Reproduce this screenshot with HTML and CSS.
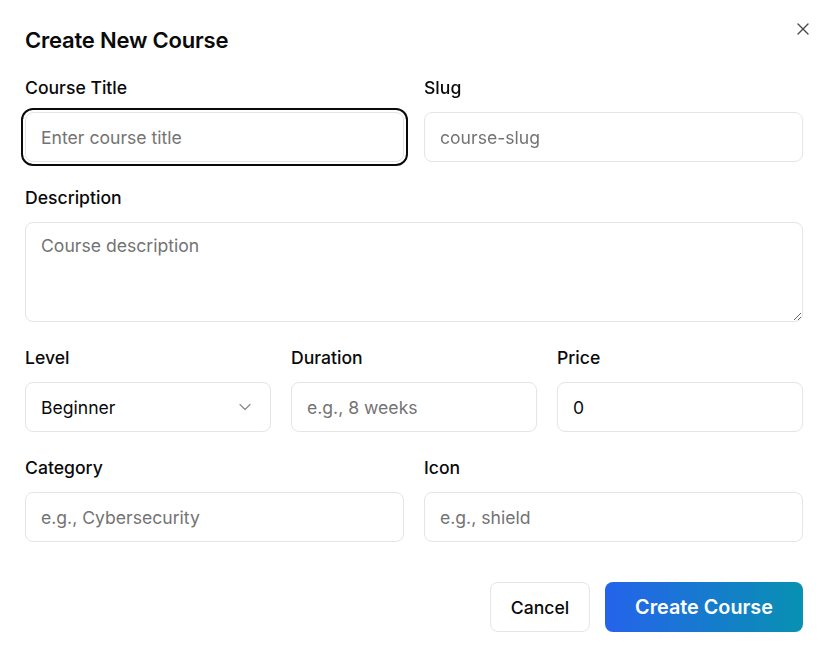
FILE: index.html
```html
<!DOCTYPE html>
<html lang="en">
<head>
<meta charset="utf-8">
<title>Create New Course</title>
<link rel="stylesheet" href="styles.css">
</head>
<body>
<div class="dialog">
  <button class="close" aria-label="Close">
    <svg width="12" height="12" viewBox="0 0 12 12" fill="none" stroke="currentColor" stroke-width="1.4" stroke-linecap="round"><path d="M1 1 11 11"/><path d="M11 1 1 11"/></svg>
  </button>
  <h2 class="title">Create New Course</h2>
  <form class="form">
    <div class="row two">
      <div class="field">
        <label class="label">Course Title</label>
        <input class="input focused" placeholder="Enter course title" autofocus>
      </div>
      <div class="field">
        <label class="label">Slug</label>
        <input class="input" placeholder="course-slug">
      </div>
    </div>
    <div class="field">
      <label class="label">Description</label>
      <textarea class="input textarea" placeholder="Course description"></textarea>
    </div>
    <div class="row three">
      <div class="field">
        <label class="label">Level</label>
        <div class="input select">
          <span>Beginner</span>
          <svg width="12" height="8" viewBox="0 0 12 8" fill="none" stroke="currentColor" stroke-width="1.2" stroke-linecap="round" stroke-linejoin="round"><path d="M1 1.5 6 6.5 11 1.5"/></svg>
        </div>
      </div>
      <div class="field">
        <label class="label">Duration</label>
        <input class="input" placeholder="e.g., 8 weeks">
      </div>
      <div class="field">
        <label class="label">Price</label>
        <input class="input" value="0">
      </div>
    </div>
    <div class="row two">
      <div class="field">
        <label class="label">Category</label>
        <input class="input" placeholder="e.g., Cybersecurity">
      </div>
      <div class="field">
        <label class="label">Icon</label>
        <input class="input" placeholder="e.g., shield">
      </div>
    </div>
    <div class="actions">
      <button type="button" class="btn cancel">Cancel</button>
      <button type="button" class="btn primary">Create Course</button>
    </div>
  </form>
</div>
</body>
</html>
```

FILE: styles.css
```css
* { box-sizing: border-box; }
html, body {
  margin: 0;
  background: #fff;
  font-family: Inter, "Noto Sans", sans-serif;
  color: #0a0a0a;
}
.dialog {
  position: relative;
  width: 830px;
  height: 660px;
  padding: 26px 27px 25px 25px;
}
.close {
  position: absolute;
  top: 23px;
  left: 797px;
  background: none;
  border: 0;
  padding: 0;
  color: #4a4a4a;
  display: flex;
  cursor: pointer;
}
.title {
  margin: 0;
  font-size: 22px;
  line-height: 28px;
  font-weight: 600;
  letter-spacing: -0.2px;
}
.form {
  margin-top: 22px;
  display: flex;
  flex-direction: column;
  gap: 24px;
}
.row {
  display: grid;
  gap: 20px;
}
.row.two { grid-template-columns: 1fr 1fr; }
.row.three { grid-template-columns: 1fr 1fr 1fr; }
.field {
  display: flex;
  flex-direction: column;
  gap: 12px;
  min-width: 0;
}
.label {
  font-size: 17.6px;
  line-height: 24px;
  font-weight: 500;
}
.input {
  height: 50px;
  width: 100%;
  border: 1px solid #e5e5e5;
  border-radius: 8px;
  padding: 0 15px;
  font-family: inherit;
  font-size: 17.6px;
  color: #0a0a0a;
  background: #fff;
  outline: none;
  caret-color: #0a0a0a;
}
.input::placeholder { color: #737373; }
.input.focused {
  outline: 2px solid #0a0a0a;
  outline-offset: 2px;
}
.textarea {
  height: 100px;
  padding: 11px 15px;
  line-height: 24px;
  resize: vertical;
  display: block;
}
.select {
  display: flex;
  align-items: center;
  justify-content: space-between;
  padding-right: 19px;
}
.select svg { color: #8a8a8a; }
.actions {
  display: flex;
  justify-content: flex-end;
  gap: 15px;
  margin-top: 16px;
}
.btn {
  height: 50px;
  border-radius: 8px;
  font-family: inherit;
  cursor: pointer;
}
.cancel {
  width: 100px;
  background: #fff;
  border: 1px solid #e5e5e5;
  font-size: 17.6px;
  font-weight: 500;
  color: #0a0a0a;
}
.primary {
  width: 198px;
  border: 0;
  color: #fff;
  font-size: 19.8px;
  font-weight: 600;
  background: linear-gradient(90deg, #2563eb, #0891b2);
}
```
